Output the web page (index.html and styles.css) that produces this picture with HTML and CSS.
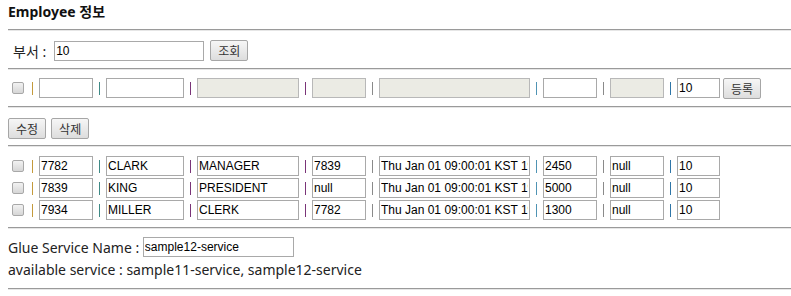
FILE: index.html
```html
<!DOCTYPE html>
<html lang="ko">
<head>
    <meta charset="UTF-8">
    <title>Employee 정보</title>
    <link rel="stylesheet" href="styles.css">
</head>
<body>
    <div class="title">Employee 정보</div>
    <hr>

    <div class="search">
        <label class="lbl">부서 :</label>
        <input type="text" class="fld w150" value="10">
        <button type="button" class="btn">조회</button>
    </div>
    <hr>

    <div class="insert">
        <div class="row">
            <input type="checkbox" class="chk" disabled>
            <span class="sep c1"></span><input type="text" class="fld w54">
            <span class="sep c2"></span><input type="text" class="fld w78">
            <span class="sep c3"></span><input type="text" class="fld w102" disabled>
            <span class="sep c3"></span><input type="text" class="fld w54" disabled>
            <span class="sep c5"></span><input type="text" class="fld w151" disabled>
            <span class="sep c6"></span><input type="text" class="fld w54">
            <span class="sep c5"></span><input type="text" class="fld w54" disabled>
            <span class="sep c8"></span><input type="text" class="fld w43" value="10">
            <button type="button" class="btn reg">등록</button>
        </div>
    </div>
    <hr>

    <div class="actions">
        <button type="button" class="btn">수정</button>
        <button type="button" class="btn">삭제</button>
    </div>
    <hr>

    <div class="list" id="empList"></div>
    <hr>

    <div class="glue">
        <div class="line">Glue Service Name : <input type="text" class="fld w151 glue-name" value="sample12-service"></div>
        <div class="line">available service : sample11-service, sample12-service</div>
    </div>
    <hr>

    <script>
        // employee rows from the query
        const emps = [
            ['7782', 'CLARK', 'MANAGER', '7839', 'Thu Jan 01 09:00:01 KST 1970', '2450', 'null', '10'],
            ['7839', 'KING', 'PRESIDENT', 'null', 'Thu Jan 01 09:00:01 KST 1970', '5000', 'null', '10'],
            ['7934', 'MILLER', 'CLERK', '7782', 'Thu Jan 01 09:00:01 KST 1970', '1300', 'null', '10']
        ];
        const widths = ['w54', 'w78', 'w102', 'w54', 'w151', 'w54', 'w54', 'w43'];
        const seps = ['c1', 'c2', 'c3', 'c3', 'c5', 'c6', 'c5', 'c8'];

        const list = document.getElementById('empList');
        emps.forEach(emp => {
            const row = document.createElement('div');
            row.className = 'row';
            let html = '<input type="checkbox" class="chk">';
            emp.forEach((v, i) => {
                html += '<span class="sep ' + seps[i] + '"></span>';
                html += '<input type="text" class="fld ' + widths[i] + '" value="' + v + '">';
            });
            row.innerHTML = html;
            list.appendChild(row);
        });
    </script>
</body>
</html>
```

FILE: styles.css
```css
body {
    font-family: "Noto Sans", "Noto Sans CJK KR", sans-serif;
    font-size: 14px;
    color: #222;
    margin: 0 0 0 8px;
    padding-top: 1px;
}
hr {
    margin: 0;
    border: none;
    border-top: 1px solid #9a9a9a;
    border-bottom: 1px solid #e6e6e6;
    height: 0;
}
.title {
    font-weight: bold;
    height: 28px;
    line-height: 22px;
    color: #111;
}
.search {
    display: flex;
    align-items: center;
    height: 21px;
    padding: 9px 0 7px 0;
}
.lbl {
    padding-left: 5px;
    margin-right: 8px;
}
.insert {
    padding: 8px 0 8px 0;
}
.actions {
    display: flex;
    gap: 5px;
    padding: 10px 0 6px 0;
}
.list {
    display: flex;
    flex-direction: column;
    gap: 2px;
    padding: 9px 0 7px 0;
}
.glue {
    padding: 8px 0 7px 0;
}
.line {
    display: flex;
    align-items: center;
    height: 20px;
    margin-bottom: 2px;
    white-space: pre;
}
.glue-name {
    margin-left: 3px;
}
.row {
    display: flex;
    align-items: center;
    height: 20px;
}
.fld {
    box-sizing: border-box;
    height: 20px;
    border: 1px solid #a9a9a9;
    padding: 0 1px;
    margin: 0;
    font-family: "Liberation Sans", Arial, sans-serif;
    font-size: 12px;
    color: #000;
    background: #fff;
}
.fld:disabled {
    background: #ebebe4;
    border-color: #b8b8b8;
}
.w43 { width: 43px; }
.w54 { width: 54px; }
.w78 { width: 78px; }
.w102 { width: 102px; }
.w150 { width: 150px; }
.w151 { width: 151px; }
.btn {
    box-sizing: border-box;
    height: 21px;
    padding: 0 7px;
    margin: 0 0 0 6px;
    border: 1px solid #a6a6a6;
    border-radius: 2px;
    background: linear-gradient(#f6f6f6, #dddddd);
    font-family: "Noto Sans CJK KR", sans-serif;
    font-size: 12px;
    color: #333;
}
.actions .btn {
    margin: 0;
}
.reg {
    margin-left: 3px;
}
.chk {
    appearance: none;
    box-sizing: border-box;
    width: 12px;
    height: 12px;
    margin: 0 0 0 4px;
    border: 1px solid #a8a8a8;
    border-radius: 2px;
    background: linear-gradient(#f2f2f2, #d6d6d6);
}
.sep {
    width: 0;
    height: 13px;
    border-left: 1px solid;
    margin: 1px 6px 0 6px;
}
.chk + .sep {
    margin-left: 8px;
}
.c1 { color: #c49a3c; }
.c2 { color: #3f8a86; }
.c3 { color: #7a3478; }
.c5 { color: #8a8a8a; }
.c6 { color: #4f94b4; }
.c8 { color: #2f76a8; }
```
